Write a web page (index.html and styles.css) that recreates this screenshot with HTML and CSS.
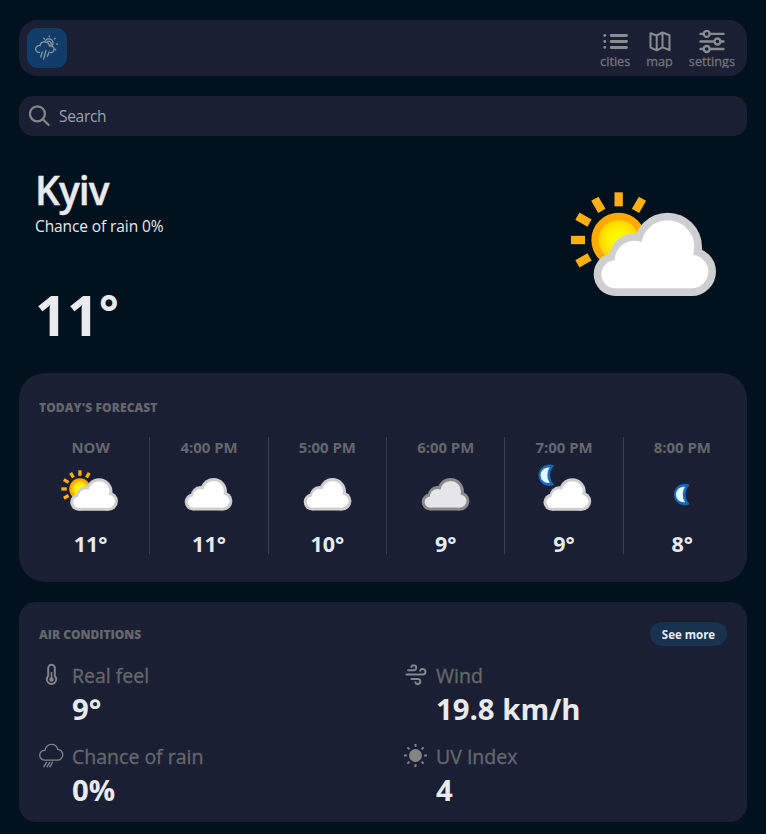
FILE: index.html
```html
<!DOCTYPE html>
<html lang="en">
<head>
<meta charset="utf-8">
<title>Weather</title>
<link rel="stylesheet" href="styles.css">
</head>
<body>
<svg class="defs" aria-hidden="true">
  <defs>
    <radialGradient id="sunFill"><stop offset="0" stop-color="#ffff00"/><stop offset=".55" stop-color="#fff000"/><stop offset="1" stop-color="#ffd200"/></radialGradient>
    <g id="bumps">
      <circle cx="195" cy="312" r="65"/><circle cx="252" cy="265" r="76"/><circle cx="352" cy="230" r="103"/><circle cx="424" cy="304" r="73"/><rect x="195" y="250" width="230" height="127"/>
    </g>
    <g id="bumpsInner">
      <circle cx="195" cy="312" r="42"/><circle cx="252" cy="270" r="59"/><circle cx="352" cy="230" r="80"/><circle cx="424" cy="304" r="50"/><rect x="195" y="260" width="229" height="94"/>
    </g>
    <g id="cloud"><use href="#bumps" fill="#cfcfd1"/><use href="#bumpsInner" fill="#fff"/></g>
    <g id="overcast"><use href="#bumps" fill="#8b8b8d"/><use href="#bumpsInner" fill="#e6e6e8"/></g>
    <g id="sun">
      <circle cx="205" cy="209" r="82" fill="#ffaa00"/><circle cx="205" cy="209" r="60" fill="url(#sunFill)"/>
      <g fill="#ffb010">
        <rect id="ray" x="192.500" y="66" width="25" height="42"/>
        <use href="#ray" transform="rotate(30 205 209)"/><use href="#ray" transform="rotate(-30 205 209)"/><use href="#ray" transform="rotate(-60 205 209)"/><use href="#ray" transform="rotate(-90 205 209)"/><use href="#ray" transform="rotate(-120 205 209)"/>
      </g>
    </g>
    <g id="moon"><path d="M134 10A83 83 0 1 0 134 156Q102 128 102 83Q102 38 134 10Z" fill="#1568bd"/><path d="M98 24A60 60 0 1 0 98 142Q80 118 80 83Q80 48 98 24Z" fill="#e6f7ff"/></g>
  </defs>
</svg>
<main class="app">
  <header class="bar">
    <div class="logo">
      <svg width="40" height="40" viewBox="0 0 40 40" fill="none" stroke="#8b979f" stroke-width="1.300" stroke-linecap="round">
        <path d="M12.500 24.500C9.200 24.500 8 21.500 9 19.500C9.800 18 11.300 17.400 13 17.700C13.300 15.200 15.500 13.700 17.800 13.800C20.300 13.900 22.200 15.700 22.500 18C25.200 17.700 27.200 19.300 27 21.700C26.800 23.700 25.200 24.700 23.500 24.500M18.300 13C19.500 10.800 22.200 10.200 24.200 11.500C26.500 13 26.700 16 24.800 17.700M20.800 13.300C22.500 12.800 24.300 14 24.200 16.300"/>
        <path d="M22.300 8.700v-.900M17.500 11l-.7-.7M27.400 10.900l.8-.8M29.500 16.200h1M28 21.200l.7.600"/>
        <path d="M15.300 24l-1.600 5M18.900 22.500l-2.300 8.700M22 24l-1.600 4.500"/>
      </svg>
    </div>
    <nav class="nav">
      <a class="nav-item">
        <svg width="25" height="24" viewBox="0 0 25 24" fill="#898b90"><path d="M8.200 4h15.300a1.300 1.300 0 0 1 0 2.900H8.200a1.300 1.300 0 0 1 0-2.900zM8.200 10.100h15.300a1.300 1.300 0 0 1 0 2.900H8.200a1.300 1.300 0 0 1 0-2.900zM8.200 16h15.300a1.300 1.300 0 0 1 0 2.900H8.200a1.300 1.300 0 0 1 0-2.900z"/><circle cx="1.800" cy="5.500" r="1.400"/><circle cx="1.800" cy="11.500" r="1.400"/><circle cx="1.800" cy="17.400" r="1.400"/></svg>
        <span class="nav-label">cities</span>
      </a>
      <a class="nav-item">
        <svg width="24" height="24" viewBox="0 0 24 24" fill="none" stroke="#898b90" stroke-width="2" stroke-linejoin="round"><path d="M2.500 3.300L8.700 5.500l5.800-3 7 2.800v14.700l-7-2.600-5.800 3-6.200-2.900zM8.700 5.500v15M14.500 2.500v15"/></svg>
        <span class="nav-label">map</span>
      </a>
      <a class="nav-item">
        <svg width="26" height="24" viewBox="0 0 26 24" fill="none" stroke="#898b90" stroke-width="2.400" stroke-linecap="round"><path d="M1.500 3.900h3M11 3.900h13.500M1.500 11.500h13M21.500 11.500h3M1.500 19h3M11 19h13.500"/><circle cx="7.700" cy="3.900" r="3"/><circle cx="18.500" cy="11.500" r="3"/><circle cx="7.700" cy="19" r="3"/></svg>
        <span class="nav-label">settings</span>
      </a>
    </nav>
  </header>

  <div class="search">
    <svg width="22" height="22" viewBox="0 0 22 22" fill="none" stroke="#858585" stroke-width="2.200" stroke-linecap="round"><circle cx="8.400" cy="8.800" r="7.500"/><path d="M13.900 14.300l5.700 5.700"/></svg>
    <span class="placeholder">Search</span>
  </div>

  <section class="hero">
    <div>
      <h1 class="city">Kyiv</h1>
      <p class="rain">Chance of rain 0%</p>
      <p class="now">11<span class="degree">°</span></p>
    </div>
    <svg class="hero-icon" viewBox="32 2 492 492"><use href="#sun"/><use href="#cloud"/></svg>
  </section>

  <section class="card forecast">
    <h2 class="title today">TODAY'S FORECAST</h2>
    <ul class="hours">
      <li class="hour"><span class="time">NOW</span><svg class="icon" viewBox="44 2 492 492"><use href="#sun"/><use href="#cloud"/></svg><b class="temp">11°</b></li>
      <li class="hour"><span class="time">4:00 PM</span><svg class="icon" viewBox="71 4 492 492"><use href="#cloud"/></svg><b class="temp">11°</b></li>
      <li class="hour"><span class="time">5:00 PM</span><svg class="icon" viewBox="71 4 492 492"><use href="#cloud"/></svg><b class="temp">10°</b></li>
      <li class="hour"><span class="time">6:00 PM</span><svg class="icon" viewBox="71 4 492 492"><use href="#overcast"/></svg><b class="temp">9°</b></li>
      <li class="hour"><span class="time">7:00 PM</span><svg class="icon" viewBox="42 2 492 492"><use href="#moon" x="80" y="21"/><use href="#cloud"/></svg><b class="temp">9°</b></li>
      <li class="hour"><span class="time">8:00 PM</span><svg class="icon" viewBox="42 2 492 492"><use href="#moon" x="206" y="169"/></svg><b class="temp">8°</b></li>
    </ul>
  </section>

  <section class="card air">
    <div class="air-head">
      <h2 class="title">AIR CONDITIONS</h2>
      <button class="more">See more</button>
    </div>
    <div class="stats">
      <div class="stat">
        <svg width="25" height="25" viewBox="0 0 25 25" fill="none" stroke="#85868a" stroke-width="1.900" stroke-linecap="round"><path d="M9.200 14V6a3.300 3.300 0 0 1 6.600 0v8a4.700 4.700 0 1 1-6.600 0z"/><path d="M12.500 10.500v6" stroke-width="1.500"/><circle cx="12.500" cy="17.500" r="2.200" fill="#85868a" stroke="none"/></svg>
        <div><p class="label">Real feel</p><p class="value">9°</p></div>
      </div>
      <div class="stat">
        <svg width="25" height="25" viewBox="0 0 25 25" fill="none" stroke="#85868a" stroke-width="2" stroke-linecap="round"><path d="M5 8.300h5.700a2.500 2.500 0 1 0-2.300-3.400M3.500 12.600h16.200a2.800 2.800 0 1 0-2.600-4M8.500 16.900h6.200a2.600 2.600 0 1 1-2.400 3.500"/></svg>
        <div><p class="label">Wind</p><p class="value">19.8 km/h</p></div>
      </div>
      <div class="stat">
        <svg width="25" height="25" viewBox="0 0 25 25" fill="none" stroke="#85868a" stroke-width="1.300" stroke-linecap="round"><path d="M5.400 17.100A4.900 4.900 0 0 1 5.900 7.300C6.800 3.500 9.400 1.300 12.400 1.300c3.200 0 5.600 2 6.200 5a5.400 5.400 0 0 1-.5 10.800z"/><path d="M7.500 19.300l-2.600 4.500M10.700 19.300l-2.600 4.500M13.500 19.300l-2.600 4.500"/></svg>
        <div><p class="label">Chance of rain</p><p class="value">0%</p></div>
      </div>
      <div class="stat">
        <svg width="25" height="25" viewBox="0 0 25 25" stroke="#858585" stroke-width="2"><circle cx="12.500" cy="12.500" r="6.500" fill="#858585" stroke="none"/><path d="M12.500 1v2.800M12.500 21.200V24M1 12.500h2.800M21.200 12.500H24M4.400 4.400l2 2M18.600 18.600l2 2M4.400 20.600l2-2M18.600 6.400l2-2"/></svg>
        <div><p class="label">UV Index</p><p class="value">4</p></div>
      </div>
    </div>
  </section>
</main>
</body>
</html>
```
FILE: styles.css
```css
* { box-sizing: border-box; margin: 0; padding: 0; }

body {
  height: 834px;
  overflow: hidden;
  background: #01111d;
  color: #e8eaed;
  font-family: "Open Sans", "Noto Sans", sans-serif;
}

svg { display: block; flex: none; }
.defs { width: 0; height: 0; position: absolute; }

.app { width: 728px; margin: 20px 0 0 19px; }

.bar {
  display: flex;
  justify-content: space-between;
  height: 56px;
  padding: 8px 12px 8px 8px;
  border-radius: 18px;
  background: #1a1f34;
}
.logo { width: 40px; height: 40px; border-radius: 11px; background: #113d6b; }
.nav { display: flex; gap: 16px; padding-top: 2px; }
.nav-item { display: flex; flex-direction: column; align-items: center; height: 38px; }
.nav-label {
  height: 14px;
  overflow: hidden;
  line-height: 15px;
  font-size: 12.7px;
  color: #74757b;
  -webkit-text-stroke: .3px #74757b;
}

.search {
  display: flex;
  align-items: center;
  gap: 8px;
  height: 40px;
  margin-top: 20px;
  padding-left: 10px;
  border-radius: 14px;
  background: #1a1f34;
}
.placeholder { font-size: 15.5px; line-height: 22px; letter-spacing: -.3px; color: #9ba2ae; }

.hero {
  display: flex;
  justify-content: space-between;
  height: 237px;
  padding: 28px 22.3px 0 16px;
}
.city { font-size: 39px; line-height: 52px; font-weight: 600; letter-spacing: -1px; -webkit-text-stroke: .4px #e8eaed; }
.rain { font-size: 15.5px; line-height: 22px; letter-spacing: -.1px; margin-top: -1px; }
.now { margin-top: 40px; font-size: 56px; line-height: 74px; font-weight: 700; }
.degree { font-size: 46px; line-height: 0; vertical-align: 7px; }
.hero-icon { width: 164px; height: 164px; margin-top: 6.7px; }

.card { background: #1a1f34; }
.title { position: relative; top: 1px; font-size: 12px; line-height: 18px; font-weight: 800; color: #66676b; }

.forecast { height: 209px; padding: 25px 5px 0 13px; border-radius: 26px; }
.today { margin-left: 7px; letter-spacing: .1px; }
.hours {
  display: grid;
  grid-template-columns: repeat(6, 1fr);
  height: 117px;
  margin-top: 21px;
  list-style: none;
}
.hour { display: flex; flex-direction: column; align-items: center; }
.hour + .hour { box-shadow: -1px 0 #3b3f4f; }
.time { font-size: 14.9px; line-height: 20px; font-weight: 700; color: #66676b; margin-left: -1px; }
.icon { width: 64px; height: 64px; margin: 5px 0 8px; }
.temp { font-size: 21.5px; line-height: 20px; font-weight: 700; margin-left: -1px; }

.air { height: 220px; margin-top: 20px; padding: 20px; border-radius: 17px; }
.air-head { display: flex; justify-content: space-between; align-items: center; height: 24px; }
.more {
  width: 77px;
  height: 24px;
  border: 0;
  border-radius: 12px;
  background: #183250;
  color: #e8eaed;
  font: 700 11.5px/25px "Open Sans", sans-serif;
  text-align: center;
}
.stats { display: grid; grid-template-columns: 364px 1fr; row-gap: 14px; margin-top: 16px; }
.stat { display: flex; gap: 8px; height: 67px; white-space: nowrap; }
.label { padding-top: 1px; font-size: 19.5px; line-height: 26px; color: #66676b; -webkit-text-stroke: .35px #66676b; }
.value { font-size: 29.3px; line-height: 41px; font-weight: 700; }
```
